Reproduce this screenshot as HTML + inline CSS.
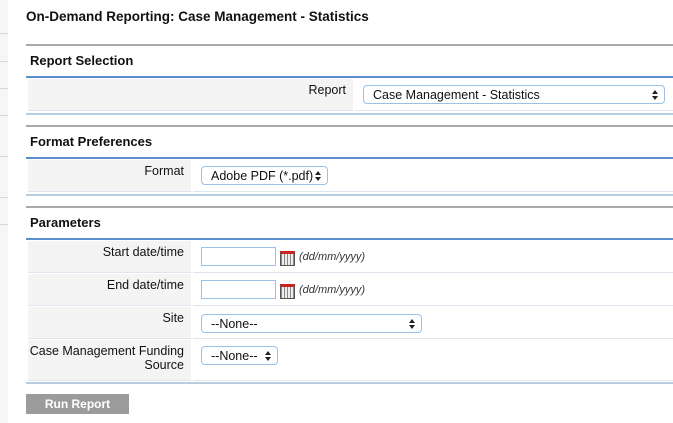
<!DOCTYPE html>
<html><head><meta charset="utf-8"><style>
body{margin:0;width:673px;height:423px;overflow:hidden;background:#fff;font-family:"Liberation Sans",Arial,sans-serif;color:#111;position:relative}
.a{position:absolute}
.strip{left:0;top:0;width:8px;height:423px;background:#f6f6f6}
.tick{left:0;width:8px;height:1px;background:#d8d8d8}
.gray{left:26px;right:0;height:2px;background:#aaa}
.blue{left:26px;right:0;height:2px;background:#5b8fcc}
.lb{left:26px;right:0;height:2px;background:#b8cce0}
.h{left:30px;font-weight:bold;font-size:13px}
.lab{background:#f4f4f4;font-size:12.5px;text-align:right;box-sizing:border-box;padding:4px 7px 0 0;border-bottom:1px solid #dde6ef}
.val{border-bottom:1px solid #dde6ef;right:0}
.sel{border:1px solid #9cc0e6;border-radius:4px;background:#fff;font-size:12.5px;box-sizing:border-box;padding:2px 0 0 9px;height:19px}
.sel:after{content:"";position:absolute;right:6px;top:4px;width:0;height:0;border-left:3px solid transparent;border-right:3px solid transparent;border-bottom:4px solid #222}
.sel:before{content:"";position:absolute;right:6px;top:10px;width:0;height:0;border-left:3px solid transparent;border-right:3px solid transparent;border-top:4px solid #222}
.inp{border:1px solid #9cc0e6;background:#fff;width:75px;height:19px;box-sizing:border-box}
.cal{width:15px;height:15px;border:1px solid #555;box-sizing:border-box;background:repeating-linear-gradient(90deg,#888 0 1px,#eee 1px 3px);border-top:3px solid #c22}
.hint{font-size:11px;font-style:italic;color:#333}
</style></head><body>
<div class="a strip"></div>
<div class="a tick" style="top:33px"></div><div class="a tick" style="top:61px"></div><div class="a tick" style="top:88px"></div><div class="a tick" style="top:115px"></div><div class="a tick" style="top:156px"></div><div class="a tick" style="top:197px"></div><div class="a tick" style="top:224px"></div>
<div class="a" style="left:26px;top:9px;font-weight:bold;font-size:13.5px">On-Demand Reporting: Case Management - Statistics</div>

<div class="a gray" style="top:44px"></div>
<div class="a h" style="top:53px">Report Selection</div>
<div class="a blue" style="top:76px"></div>
<div class="a lab" style="left:28px;top:79px;width:325px;height:32px">Report</div>
<div class="a val" style="left:355px;top:79px;height:31px"></div>
<div class="a sel" style="left:363px;top:85px;width:302px">Case Management - Statistics</div>
<div class="a lb" style="top:113px"></div>

<div class="a gray" style="top:125px"></div>
<div class="a h" style="top:134px">Format Preferences</div>
<div class="a blue" style="top:157px"></div>
<div class="a lab" style="left:28px;top:160px;width:163px;height:32px">Format</div>
<div class="a val" style="left:193px;top:160px;height:31px"></div>
<div class="a sel" style="left:201px;top:166px;width:127px">Adobe PDF (*.pdf)</div>
<div class="a lb" style="top:194px"></div>

<div class="a gray" style="top:206px"></div>
<div class="a h" style="top:215px">Parameters</div>
<div class="a blue" style="top:238px"></div>

<div class="a lab" style="left:28px;top:241px;width:163px;height:32px">Start date/time</div>
<div class="a val" style="left:193px;top:241px;height:31px"></div>
<div class="a inp" style="left:201px;top:247px"></div>
<div class="a cal" style="left:280px;top:251px"></div>
<div class="a hint" style="left:299px;top:251px">(dd/mm/yyyy)</div>

<div class="a lab" style="left:28px;top:274px;width:163px;height:32px">End date/time</div>
<div class="a val" style="left:193px;top:274px;height:31px"></div>
<div class="a inp" style="left:201px;top:280px"></div>
<div class="a cal" style="left:280px;top:284px"></div>
<div class="a hint" style="left:299px;top:284px">(dd/mm/yyyy)</div>

<div class="a lab" style="left:28px;top:307px;width:163px;height:32px">Site</div>
<div class="a val" style="left:193px;top:307px;height:31px"></div>
<div class="a sel" style="left:201px;top:314px;width:221px">--None--</div>

<div class="a lab" style="left:28px;top:340px;width:163px;height:41px;line-height:14px">Case Management Funding<br>Source</div>
<div class="a val" style="left:193px;top:340px;height:40px"></div>
<div class="a sel" style="left:201px;top:346px;width:77px">--None--</div>
<div class="a lb" style="top:382px"></div>

<div class="a" style="left:26px;top:394px;width:103px;height:20px;background:#9b9b9b;color:#fff;font-weight:bold;font-size:12px;text-align:center;line-height:20px">Run Report</div>
</body></html>
